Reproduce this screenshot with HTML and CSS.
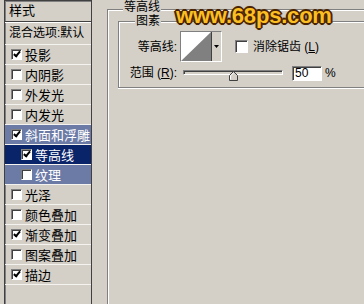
FILE: index.html
```html
<!DOCTYPE html>
<html lang="zh-CN">
<head>
  <meta charset="UTF-8">
  <title>图层样式 - 等高线</title>
  <link rel="stylesheet" href="styles.css">
</head>
<body>
  <div class="dialog">
    <div class="styles-panel">
      <div class="panel-title">样式</div>
      <div class="panel-blend">混合选项:默认</div>
      <ul class="style-list">
        <li class="style-item"><span class="check on"></span>投影</li>
        <li class="style-item"><span class="check"></span>内阴影</li>
        <li class="style-item"><span class="check"></span>外发光</li>
        <li class="style-item"><span class="check"></span>内发光</li>
        <li class="style-item active"><span class="check on"></span>斜面和浮雕</li>
        <li class="style-item sub selected"><span class="check on"></span>等高线</li>
        <li class="style-item sub active"><span class="check"></span>纹理</li>
        <li class="style-item"><span class="check"></span>光泽</li>
        <li class="style-item"><span class="check"></span>颜色叠加</li>
        <li class="style-item"><span class="check on"></span>渐变叠加</li>
        <li class="style-item"><span class="check"></span>图案叠加</li>
        <li class="style-item"><span class="check on"></span>描边</li>
      </ul>
    </div>

    <div class="group-outer">
      <span class="legend">等高线</span>
      <div class="group-inner">
        <span class="legend legend-inner">图素</span>
        <div class="form-grid">
          <label class="field-label">等高线:</label>
          <div class="field-row">
            <div class="contour-box">
              <svg class="contour-preview" width="30" height="29" viewBox="0 0 30 29">
                <rect width="30" height="29" fill="#fff"/>
                <polygon points="0,29 30,0 30,29" fill="#808080"/>
              </svg>
              <div class="contour-drop">
                <svg width="5" height="3" viewBox="0 0 5 3"><polygon points="0,0 5,0 2.5,3" fill="#000"/></svg>
              </div>
            </div>
            <span class="check big"></span>
            <span class="field-text">消除锯齿 (<u>L</u>)</span>
          </div>

          <label class="field-label">范围 (<u>R</u>):</label>
          <div class="field-row">
            <div class="slider">
              <div class="slider-track"></div>
              <svg class="slider-thumb" width="9" height="10" viewBox="0 0 9 10">
                <polygon points="0.5,4.5 4.5,0.5 8.5,4.5 8.5,9.5 0.5,9.5" fill="#d4d0c8" stroke="#404040"/>
                <polyline points="1.5,8.5 1.5,4.9 4.5,1.9" fill="none" stroke="#fff"/>
              </svg>
            </div>
            <div class="num-input">50</div>
            <span class="field-text">%</span>
          </div>
        </div>
      </div>
    </div>

    <div class="watermark">www.68ps.com</div>
  </div>
</body>
</html>
```

FILE: styles.css
```css
html, body {
  margin: 0;
  padding: 0;
  background-color: #d4d0c8; /* 窗口灰 */
  font-family: "Liberation Sans", "Noto Sans CJK SC", sans-serif;
  font-size: 12px;
  color: #000;
}
.dialog {
  position: relative;
  display: flex;
  height: 304px;
  padding-left: 4px;
  overflow: hidden;
}

/* 左边样式列表 */
.styles-panel {
  width: 88px;
  flex: none;
  box-sizing: border-box;
  border: 1px solid #404040;
  border-bottom: none;
  box-shadow: inset 1px 1px 0 #808080;
}
.panel-title {
  height: 20px;
  line-height: 20px;
  padding-left: 4px;
  font-size: 13px;
  border-bottom: 1px solid #404040;
  box-shadow: 0 1px 0 #fff;
  margin-bottom: 1px;
}
.panel-blend {
  height: 21px;
  line-height: 21px;
  padding-left: 4px;
  font-size: 12px;
  white-space: nowrap;
  border-bottom: 1px solid #f4f3f0;
}
.style-list {
  list-style: none;
  margin: 0;
  padding: 0;
}
.style-item {
  display: flex;
  align-items: center;
  gap: 3px;
  height: 19px;
  padding-left: 6px;
  font-size: 13px;
  white-space: nowrap;
  border-bottom: 1px solid #f4f3f0;
}
.style-item.sub { padding-left: 16px; }
.style-item.active { background-color: #6c7aa6; color: #fff; }
.style-item.selected { background-color: #0a246a; color: #fff; }

/* 复选框 */
.check {
  position: relative;
  display: inline-block;
  flex: none;
  width: 11px;
  height: 11px;
  box-sizing: border-box;
  background-color: #fff;
  border: 1px solid;
  border-color: #808080 #fff #fff #808080;
  box-shadow: inset 1px 1px 0 #404040;
}
.check.on::after {
  content: "";
  position: absolute;
  left: 3px;
  top: 0px;
  width: 2px;
  height: 5px;
  border: solid #000;
  border-width: 0 2px 2px 0;
  transform: rotate(40deg);
}
.check.big {
  width: 13px;
  height: 13px;
  margin-left: 13px;
}

/* 分组框 */
.group-outer {
  flex: 1;
  margin-left: 15px;
  margin-top: 9px;
  border-top: 1px solid #808080;
  border-left: 1px solid #808080;
  box-shadow: inset 1px 1px 0 #fff;
}
.legend {
  display: table;
  margin: -9px 0 0 15px;
  padding: 0 1px;
  line-height: 13px;
  background-color: #d4d0c8;
}
.group-inner {
  margin: 7px -30px 0 10px;
  height: 65px;
  border: 1px solid #808080;
  box-shadow: inset 1px 1px 0 #fff, 0 1px 0 #fff;
}
.legend-inner {
  margin: -7px 0 0 16px;
}
.form-grid {
  display: grid;
  grid-template-columns: 58px auto;
  column-gap: 3px;
  row-gap: 3px;
  margin-top: 3px;
  align-items: center;
}
.field-label {
  text-align: right;
  white-space: nowrap;
  line-height: 14px;
}
.field-row {
  display: flex;
  align-items: center;
}
.field-text {
  margin-left: 5px;
  line-height: 14px;
  white-space: nowrap;
}

/* 等高线预览 */
.contour-box {
  display: flex;
  width: 42px;
  height: 31px;
  box-sizing: border-box;
  border: 1px solid;
  border-color: #808080 #fff #fff #808080;
}
.contour-preview { display: block; }
.contour-drop {
  flex: 1;
  display: flex;
  justify-content: center;
  align-items: center;
  border-left: 1px solid #404040;
  background-color: #d4d0c8;
}

/* 滑块 */
.slider {
  position: relative;
  width: 100px;
  height: 16px;
  margin-left: 3px;
  display: flex;
  align-items: center;
}
.slider-track {
  width: 100%;
  height: 5px;
  box-sizing: border-box;
  border: 1px solid;
  border-color: #808080 #fff #fff #808080;
  box-shadow: inset 1px 1px 0 #404040;
  margin-top: -2px;
}
.slider-thumb {
  position: absolute;
  left: 46px;
  top: 6px;
}
.num-input {
  width: 30px;
  height: 15px;
  margin-left: 9px;
  box-sizing: border-box;
  padding-left: 2px;
  line-height: 13px;
  font-size: 12px;
  background-color: #fff;
  border: 1px solid;
  border-color: #808080 #fff #fff #808080;
  box-shadow: inset 1px 1px 0 #404040;
}
.num-input + .field-text { margin-left: 3px; }

/* 水印 */
.watermark {
  position: absolute;
  left: 176px;
  top: 5px;
  font-family: "Liberation Sans", sans-serif;
  font-weight: bold;
  font-size: 22px;
  line-height: 22px;
  letter-spacing: -0.2px;
  color: #fbbf24;
  text-shadow:
    2px 0 0 #4a2400, -2px 0 0 #4a2400, 0 2px 0 #4a2400, 0 -2px 0 #4a2400,
    1px 1px 0 #4a2400, -1px -1px 0 #4a2400, 1px -1px 0 #4a2400, -1px 1px 0 #4a2400,
    0 0 3px #7a4a10;
}
```
